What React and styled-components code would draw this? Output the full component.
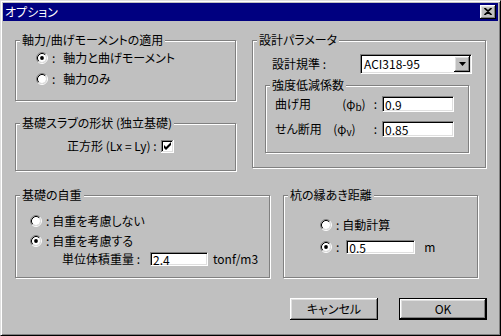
import React from 'react';
import styled, { createGlobalStyle } from 'styled-components';

const FONT = `"Noto Sans CJK JP", "Liberation Sans", sans-serif`;

const Global = createGlobalStyle`
  html, body { margin: 0; padding: 0; background: #c0c0c0; }
  body {
    font-family: ${FONT};
    font-size: 12px;
    line-height: 14px;
    color: #000;
    font-feature-settings: "palt";
  }
  *, *::before, *::after { box-sizing: border-box; }
`;

const Window = styled.div`
  width: 501px;
  height: 336px;
  background: #c0c0c0;
  border: 1px solid;
  border-color: #dfdfdf #000 #000 #dfdfdf;
  box-shadow: inset 1px 1px 0 #fff, inset -1px -1px 0 #808080;
  padding: 2px;
  display: flex;
  flex-direction: column;
`;

const TitleBar = styled.div`
  flex: none;
  height: 18px;
  background: #000080;
  color: #fff;
  display: flex;
  align-items: center;
  justify-content: space-between;
  padding: 0 2px;
`;

const Title = styled.span`
  line-height: 18px;
  font-size: 12px;
`;

const raised = `
  background: #c0c0c0;
  box-shadow: inset -1px -1px 0 #000, inset 1px 1px 0 #fff,
    inset -2px -2px 0 #808080, inset 2px 2px 0 #dfdfdf;
`;

const sunken = `
  background: #fff;
  border: 1px solid;
  border-color: #808080 #fff #fff #808080;
  box-shadow: inset 1px 1px 0 #000, inset -1px -1px 0 #dfdfdf;
`;

const CloseButton = styled.div`
  width: 16px;
  height: 14px;
  ${raised}
  display: flex;
  align-items: center;
  justify-content: center;
  padding-bottom: 1px;
`;

const Body = styled.div`
  flex: 1;
  display: flex;
  flex-direction: column;
  padding: 12px 12px 0 12px;
`;

const Row = styled.div`
  display: flex;
  align-items: flex-start;
  gap: ${(p) => p.$gap || 0}px;
  margin-top: ${(p) => p.$mt || 0}px;
  margin-right: ${(p) => p.$mr || 0}px;
  justify-content: ${(p) => p.$justify || 'flex-start'};
`;

const Column = styled.div`
  display: flex;
  flex-direction: column;
  gap: ${(p) => p.$gap || 0}px;
`;

const Group = styled.div`
  position: relative;
  flex: none;
  width: ${(p) => p.$w}px;
  height: ${(p) => p.$h}px;
  margin-top: ${(p) => (p.$mt == null ? 7 : p.$mt)}px;
  border: 1px solid #808080;
  box-shadow: 1px 1px 0 #fff, inset 1px 1px 0 #fff;
  padding: ${(p) => p.$pad};
`;

const Caption = styled.span`
  position: absolute;
  top: -8px;
  left: 4px;
  padding: 0 2px;
  background: #c0c0c0;
  line-height: 14px;
  white-space: nowrap;
`;

const Stack = styled.div`
  display: flex;
  flex-direction: column;
  gap: ${(p) => p.$gap || 0}px;
`;

const Line = styled.div`
  display: flex;
  align-items: center;
  height: ${(p) => p.$h || 14}px;
  margin-top: ${(p) => p.$mt || 0}px;
  margin-left: ${(p) => p.$ml || 0}px;
  white-space: nowrap;
`;

const Colon = styled.span`
  margin-left: ${(p) => p.$ml ?? 4}px;
  margin-right: ${(p) => p.$mr ?? 3}px;
`;

const FixedLabel = styled.span`
  width: ${(p) => p.$w}px;
  flex: none;
`;

const Field = styled.input`
  ${sunken}
  width: ${(p) => p.$w}px;
  height: ${(p) => p.$h || 14}px;
  margin-left: ${(p) => p.$ml || 0}px;
  padding: 0 2px;
  font-family: ${FONT};
  font-size: 12px;
  color: #000;
  outline: none;
  flex: none;
`;

const Unit = styled.span`
  margin-left: ${(p) => p.$ml || 0}px;
`;

const Select = styled.div`
  ${sunken}
  width: 112px;
  height: 20px;
  padding: 1px;
  display: flex;
  align-items: center;
  flex: none;
`;

const SelectText = styled.span`
  flex: 1;
  padding-left: 2px;
`;

const DropButton = styled.div`
  width: 16px;
  height: 16px;
  ${raised}
  display: flex;
  align-items: center;
  justify-content: center;
`;

const FactorRow = styled.div`
  display: flex;
  align-items: center;
  height: 16px;
`;

const FactorLabel = styled.span`
  flex: 1;
`;

const Sym = styled.span`
  margin-right: 5px;
  display: flex;
  align-items: center;
`;

const Phi = styled.span`
  margin-right: ${(p) => p.$gap || 2}px;
  sub {
    font-size: 10px;
    vertical-align: -2px;
    line-height: 0;
  }
`;

const CheckWrap = styled.span`
  margin-left: 4px;
  display: flex;
`;

const Button = styled.div`
  width: 88px;
  height: 22px;
  display: flex;
  align-items: center;
  justify-content: center;
  ${raised}
  ${(p) =>
    p.$default &&
    `
    border: 1px solid #000;
  `}
`;

const Radio = ({ checked }) => (
  <svg width="12" height="12" viewBox="0 0 12 12" style={{ flex: 'none' }}>
    <circle cx="6" cy="6" r="4" fill="#fff" />
    <path d="M2.11 9.89 A5.5 5.5 0 0 1 9.89 2.11" fill="none" stroke="#808080" strokeWidth="1" />
    <path d="M9.89 2.11 A5.5 5.5 0 0 1 2.11 9.89" fill="none" stroke="#fff" strokeWidth="1" />
    <path d="M2.82 9.18 A4.5 4.5 0 0 1 9.18 2.82" fill="none" stroke="#000" strokeWidth="1" />
    <path d="M9.18 2.82 A4.5 4.5 0 0 1 2.82 9.18" fill="none" stroke="#dfdfdf" strokeWidth="1" />
    {checked && <circle cx="6" cy="6" r="1.9" fill="#000" />}
  </svg>
);

const Checkbox = () => (
  <svg width="13" height="13" viewBox="0 0 13 13" shapeRendering="crispEdges">
    <rect x="0" y="0" width="13" height="13" fill="#fff" />
    <rect x="0" y="0" width="12" height="1" fill="#808080" />
    <rect x="0" y="0" width="1" height="12" fill="#808080" />
    <rect x="0" y="12" width="13" height="1" fill="#fff" />
    <rect x="12" y="0" width="1" height="13" fill="#fff" />
    <rect x="1" y="1" width="10" height="1" fill="#000" />
    <rect x="1" y="1" width="1" height="10" fill="#000" />
    <rect x="1" y="11" width="11" height="1" fill="#dfdfdf" />
    <rect x="11" y="1" width="1" height="11" fill="#dfdfdf" />
    <path d="M3 5 L3 8 L5 10 L10 5 L10 2 L5 7 Z" fill="#000" shapeRendering="geometricPrecision" />
  </svg>
);

const CloseX = () => (
  <svg width="8" height="7" viewBox="0 0 8 7">
    <path d="M0.5 0 L4 3.1 L7.5 0 M0.5 7 L4 3.9 L7.5 7" stroke="#000" strokeWidth="1.7" fill="none" />
  </svg>
);

const DownArrow = () => (
  <svg width="7" height="4" viewBox="0 0 7 4">
    <path d="M0 0 H7 L3.5 4 Z" fill="#000" />
  </svg>
);

export default function App() {
  return (
    <>
      <Global />
      <Window>
        <TitleBar>
          <Title>オプション</Title>
          <CloseButton>
            <CloseX />
          </CloseButton>
        </TitleBar>
        <Body>
          <Row $gap={16}>
            <Column $gap={15}>
              <Group $w={221} $h={61} $pad="10px 0 0 20px">
                <Caption>軸力/曲げモーメントの適用</Caption>
                <Stack $gap={7}>
                  <Line>
                    <Radio checked />
                    <Colon $mr={8}>:</Colon>
                    <span>軸力と曲げモーメント</span>
                  </Line>
                  <Line>
                    <Radio />
                    <Colon $mr={8}>:</Colon>
                    <span>軸力のみ</span>
                  </Line>
                </Stack>
              </Group>
              <Group $w={221} $h={48} $pad="15px 0 0 51px">
                <Caption>基礎スラブの形状 (独立基礎)</Caption>
                <Line>
                  <span>正方形 (Lx = Ly) :</span>
                  <CheckWrap>
                    <Checkbox />
                  </CheckWrap>
                </Line>
              </Group>
            </Column>
            <Group $w={234} $h={128} $pad="13px 0 0 12px">
              <Caption>設計パラメータ</Caption>
              <Line $h={20} $ml={7}>
                <FixedLabel $w={88}>設計規準 :</FixedLabel>
                <Select>
                  <SelectText>ACI318-95</SelectText>
                  <DropButton>
                    <DownArrow />
                  </DropButton>
                </Select>
              </Line>
              <Group $w={204} $h={68} $mt={11} $pad="10px 14px 0 9px">
                <Caption>強度低減係数</Caption>
                <Stack $gap={9}>
                  <FactorRow>
                    <FactorLabel>曲げ用</FactorLabel>
                    <Sym>
                      <Phi $gap={8}>
                        (φ<sub>b</sub>)
                      </Phi>
                      :
                    </Sym>
                    <Field $w={72} $h={16} readOnly value="0.9" />
                  </FactorRow>
                  <FactorRow>
                    <FactorLabel>せん断用</FactorLabel>
                    <Sym>
                      <Phi $gap={18}>
                        (φ<sub>v</sub>)
                      </Phi>
                      :
                    </Sym>
                    <Field $w={72} $h={16} readOnly value="0.85" />
                  </FactorRow>
                </Stack>
              </Group>
            </Group>
          </Row>
          <Row $gap={13} $mt={17}>
            <Group $w={255} $h={83} $pad="18px 0 0 14px">
              <Caption>基礎の自重</Caption>
              <Stack $gap={6}>
                <Line>
                  <Radio />
                  <Colon $mr={3}>:</Colon>
                  <span>自重を考慮しない</span>
                </Line>
                <Line>
                  <Radio checked />
                  <Colon $mr={3}>:</Colon>
                  <span>自重を考慮する</span>
                </Line>
              </Stack>
              <Line $mt={4} $ml={32}>
                <FixedLabel $w={88}>単位体積重量 :</FixedLabel>
                <Field $w={58} readOnly value="2.4" />
                <Unit $ml={5}>tonf/m3</Unit>
              </Line>
            </Group>
            <Group $w={195} $h={83} $pad="22px 0 0 36px">
              <Caption>杭の縁あき距離</Caption>
              <Line>
                <Radio />
                <Colon $mr={3}>:</Colon>
                <span>自動計算</span>
              </Line>
              <Line $mt={8}>
                <Radio checked />
                <Colon $mr={0}>:</Colon>
                <Field $w={69} $ml={7} readOnly value="0.5" />
                <Unit $ml={9}>m</Unit>
              </Line>
            </Group>
          </Row>
          <Row $gap={21} $mt={20} $mr={-1} $justify="flex-end">
            <Button>キャンセル</Button>
            <Button $default>OK</Button>
          </Row>
        </Body>
      </Window>
    </>
  );
}
